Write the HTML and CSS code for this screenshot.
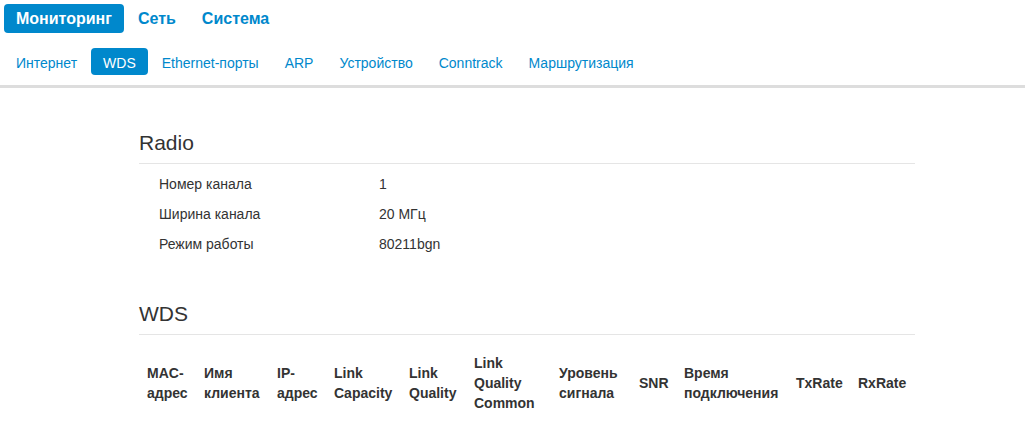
FILE: index.html
```html
<!DOCTYPE html>
<html lang="ru">
<head>
<meta charset="utf-8">
<title>WDS</title>
<link rel="stylesheet" href="styles.css">
</head>
<body>
<nav class="topnav">
  <a href="#" class="active">Мониторинг</a>
  <a href="#">Сеть</a>
  <a href="#">Система</a>
</nav>
<nav class="subnav">
  <a href="#">Интернет</a>
  <a href="#" class="active">WDS</a>
  <a href="#">Ethernet-порты</a>
  <a href="#">ARP</a>
  <a href="#">Устройство</a>
  <a href="#">Conntrack</a>
  <a href="#">Маршрутизация</a>
</nav>
<main class="content">
  <section class="section">
    <h3 class="section-title">Radio</h3>
    <div class="kv">
      <div class="kv-label">Номер канала</div><div class="kv-value">1</div>
      <div class="kv-label">Ширина канала</div><div class="kv-value">20 МГц</div>
      <div class="kv-label">Режим работы</div><div class="kv-value">80211bgn</div>
    </div>
  </section>
  <section class="section">
    <h3 class="section-title">WDS</h3>
    <table class="wds-table">
      <thead>
        <tr>
          <th class="col-mac">MAC-адрес</th>
          <th class="col-name">Имя клиента</th>
          <th class="col-ip">IP-адрес</th>
          <th class="col-cap">Link Capacity</th>
          <th class="col-lq">Link Quality</th>
          <th class="col-lqc">Link Quality Common</th>
          <th class="col-sig">Уровень сигнала</th>
          <th class="col-snr">SNR</th>
          <th class="col-time">Время подключения</th>
          <th class="col-tx">TxRate</th>
          <th class="col-rx">RxRate</th>
        </tr>
      </thead>
      <tbody></tbody>
    </table>
  </section>
</main>
</body>
</html>
```
FILE: styles.css
```css
html, body {
  margin: 0;
  padding: 0;
  background: #fff;
}
body {
  font-family: "Liberation Sans", Arial, Helvetica, sans-serif;
  font-size: 14px;
  line-height: 20px;
  color: #333;
}
a {
  color: #0088cc;
  text-decoration: none;
}
.topnav {
  display: flex;
  gap: 2px;
  padding: 4px 0 0 4px;
}
.topnav a {
  font-size: 16px;
  font-weight: bold;
  line-height: 19px;
  padding: 5px 12px;
  border-radius: 4px;
}
.topnav a.active {
  background: #0088cc;
  color: #fff;
}
.subnav {
  display: flex;
  gap: 2px;
  padding: 15px 0 10px 4px;
  border-bottom: 3px solid #ddd;
}
.subnav a {
  font-size: 14px;
  line-height: 19px;
  padding: 6px 12px 2px;
  border-radius: 4px;
}
.subnav a.active {
  background: #0088cc;
  color: #fff;
}
.content {
  margin-left: 139px;
  width: 776px;
}
.section {
  margin-top: 40px;
}
.section-title {
  margin: 0 0 5px;
  font-size: 21px;
  font-weight: normal;
  line-height: 30px;
  padding-bottom: 5px;
  border-bottom: 1px solid #e5e5e5;
}
.kv {
  display: grid;
  grid-template-columns: 220px 1fr;
  padding-left: 20px;
  line-height: 30px;
}
.wds-table {
  width: 100%;
  table-layout: fixed;
  border-collapse: collapse;
  margin-top: 10px;
}
.wds-table th {
  text-align: left;
  vertical-align: middle;
  font-weight: bold;
  padding: 8px;
  line-height: 20px;
  box-sizing: border-box;
}
.col-mac { width: 57px; }
.col-name { width: 73px; }
.col-ip { width: 57px; }
.col-cap { width: 75px; }
.col-lq { width: 65px; }
.col-lqc { width: 85px; }
.col-sig { width: 80px; }
.col-snr { width: 45px; }
.col-time { width: 112px; }
.col-tx { width: 62px; }
.col-rx { width: 65px; }
```
